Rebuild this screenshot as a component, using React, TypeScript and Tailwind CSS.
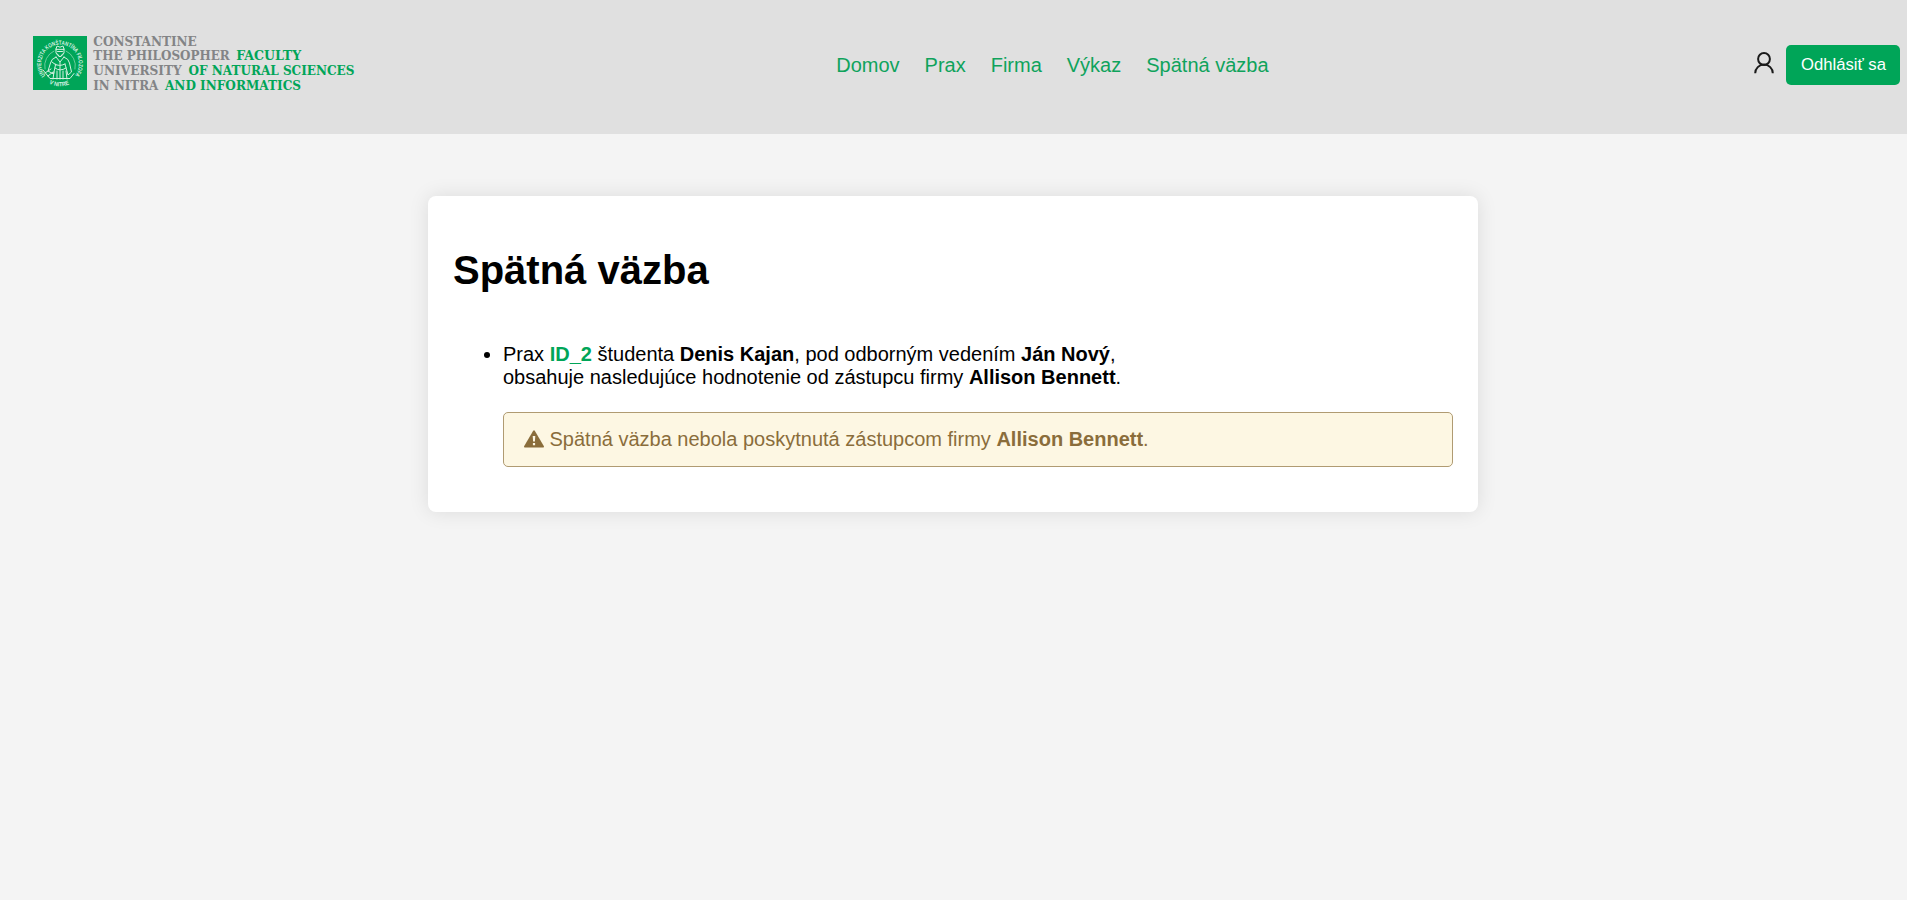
import React from "react";

const links = ["Domov", "Prax", "Firma", "Výkaz", "Spätná väzba"];

const grey = "fill-[#838486] font-bold";
const green = "fill-[#00a558] font-bold";

const logoWords = [
  { text: "CONSTANTINE", x: 65.3, y: 18.6, width: 103.5, tone: grey },
  { text: "THE PHILOSOPHER", x: 65.3, y: 33.2, width: 136.5, tone: grey },
  { text: "FACULTY", x: 208.2, y: 33.2, width: 65, tone: green },
  { text: "UNIVERSITY", x: 65.3, y: 47.9, width: 88.5, tone: grey },
  { text: "OF NATURAL SCIENCES", x: 160.5, y: 47.9, width: 166, tone: green },
  { text: "IN NITRA", x: 65.3, y: 62.5, width: 65, tone: grey },
  { text: "AND INFORMATICS", x: 137, y: 62.5, width: 136, tone: green },
];

function Logo() {
  return (
    <svg className="h-[72px] w-[340px] shrink-0" viewBox="0 0 340 72">
      <rect x="5" y="9" width="54" height="54" fill="#00a558" />
      <defs>
        <path id="ring" d="M17.500 48.500 A18.800 18.800 0 1 1 46.500 48.500" />
        <path id="ringBottom" d="M21 56.500 A23 23 0 0 0 43 56.500" />
      </defs>
      <g fill="#d5f0e0" className="font-['Liberation_Sans',sans-serif] text-[6px] font-bold">
        <text>
          <textPath href="#ring" textLength="84" lengthAdjust="spacingAndGlyphs">
            UNIVERZITA KONŠTANTÍNA FILOZOFA
          </textPath>
        </text>
        <text>
          <textPath href="#ringBottom" textLength="21" lengthAdjust="spacingAndGlyphs">V NITRE</textPath>
        </text>
      </g>
      <g fill="none" stroke="#d5f0e0" strokeWidth="1" strokeLinecap="round" strokeLinejoin="round">
        <path d="M26 24 A16 16 0 0 0 17 42 M38 24 A16 16 0 0 1 47 42" opacity="0.5" />
        <path d="M28 22 l1 -3 3 1.200 3 -1.200 1 3 z M28 22 v4 q4 7 8 0 v-4 M29.500 27 q2.500 6 5 0 M29.500 24.500 h5" />
        <path d="M28 30 q-5 2 -5.500 6 l-2.500 8 5.500 3 2 -9 M36 30 q5 2 5.500 6 l2 9 -3.500 3 -3 -11" />
        <path d="M28 30 l4 5 4 -5 M32 35 v17 M27 37 q4 3 10 0 M27 41 q5 4 11 0 M26 45 l-1 7 M29 44 v8 M35 44 v8 M38 44 l1 8" />
        <path d="M15 43 l7 8.500 h20 l4 -5 M17 46 l6 -4 M20 49 l5 -4 M24 35 l4 3" />
      </g>
      <g className="font-['DejaVu_Serif',serif] text-[13.3px]">
        {logoWords.map((w) => (
          <text key={w.text} x={w.x} y={w.y} textLength={w.width} lengthAdjust="spacingAndGlyphs" className={w.tone}>
            {w.text}
          </text>
        ))}
      </g>
    </svg>
  );
}

function UserIcon() {
  return (
    <svg className="mt-[6px] h-6 w-6" viewBox="0 0 24 24" fill="none" stroke="#1a1a1a" strokeWidth="2">
      <circle cx="12" cy="8" r="5.900" />
      <path d="M3.200 22.200 a8.800 8.600 0 0 1 17.600 0" />
    </svg>
  );
}

function WarningIcon() {
  return (
    <svg className="-mt-[2px] mr-[5.5px] h-[18px] w-5 shrink-0" viewBox="0 0 20 18">
      <path
        d="M9.200 0.700 Q10 -0.300 10.800 0.700 L19.900 16.200 Q20.200 17.400 19.300 17.500 H0.700 Q-0.200 17.400 0.100 16.200 Z"
        fill="#8a6d3b"
      />
      <path d="M8.700 6 h2.600 l-0.400 5.500 h-1.800 z M8.900 13 h2.200 v2.200 h-2.200 z" fill="#fdf7e3" />
    </svg>
  );
}

export default function App() {
  return (
    <div className="min-h-screen bg-[#f4f4f4] font-['Liberation_Sans',Arial,sans-serif] text-xl leading-[23px] text-black">
      <header className="flex h-[134px] items-start bg-[#e0e0e0] pl-7">
        <div className="pt-[27px]">
          <Logo />
        </div>
        <nav className="ml-[468.2px] flex gap-[25px] pt-[54px] text-[#0fa35c]">
          {links.map((l) => (
            <a key={l} href="#">{l}</a>
          ))}
        </nav>
        <div className="ml-auto flex gap-[10px] pr-[7px] pt-[45px]">
          <UserIcon />
          <button className="h-10 w-[114px] rounded-[5px] bg-[#00a558] pl-px text-[16.67px] leading-5 text-white">Odhlásiť sa</button>
        </div>
      </header>
      <main className="ml-[428px] mt-[62px] h-[316px] w-[1050px] rounded-lg bg-white px-[25px] pt-[51px] shadow-[0_0_20px_rgba(0,0,0,0.1)]">
        <h1 className="text-[40px] font-bold leading-[46px]">Spätná väzba</h1>
        <ul className="mt-[50px] list-disc pl-[50px]">
          <li>
            Prax <b className="text-[#00a558]">ID_2</b> študenta <b>Denis Kajan</b>, pod odborným vedením <b>Ján Nový</b>,
            <br />
            obsahuje nasledujúce hodnotenie od zástupcu firmy <b>Allison Bennett</b>.
            <div className="mt-[23px] flex h-[55px] items-center rounded-[5px] border border-[#b09b72] bg-[#fdf7e3] pl-5 text-[#8a6d3b]">
              <WarningIcon />
              <p>
                Spätná väzba nebola poskytnutá zástupcom firmy <b>Allison Bennett</b>.
              </p>
            </div>
          </li>
        </ul>
      </main>
    </div>
  );
}
